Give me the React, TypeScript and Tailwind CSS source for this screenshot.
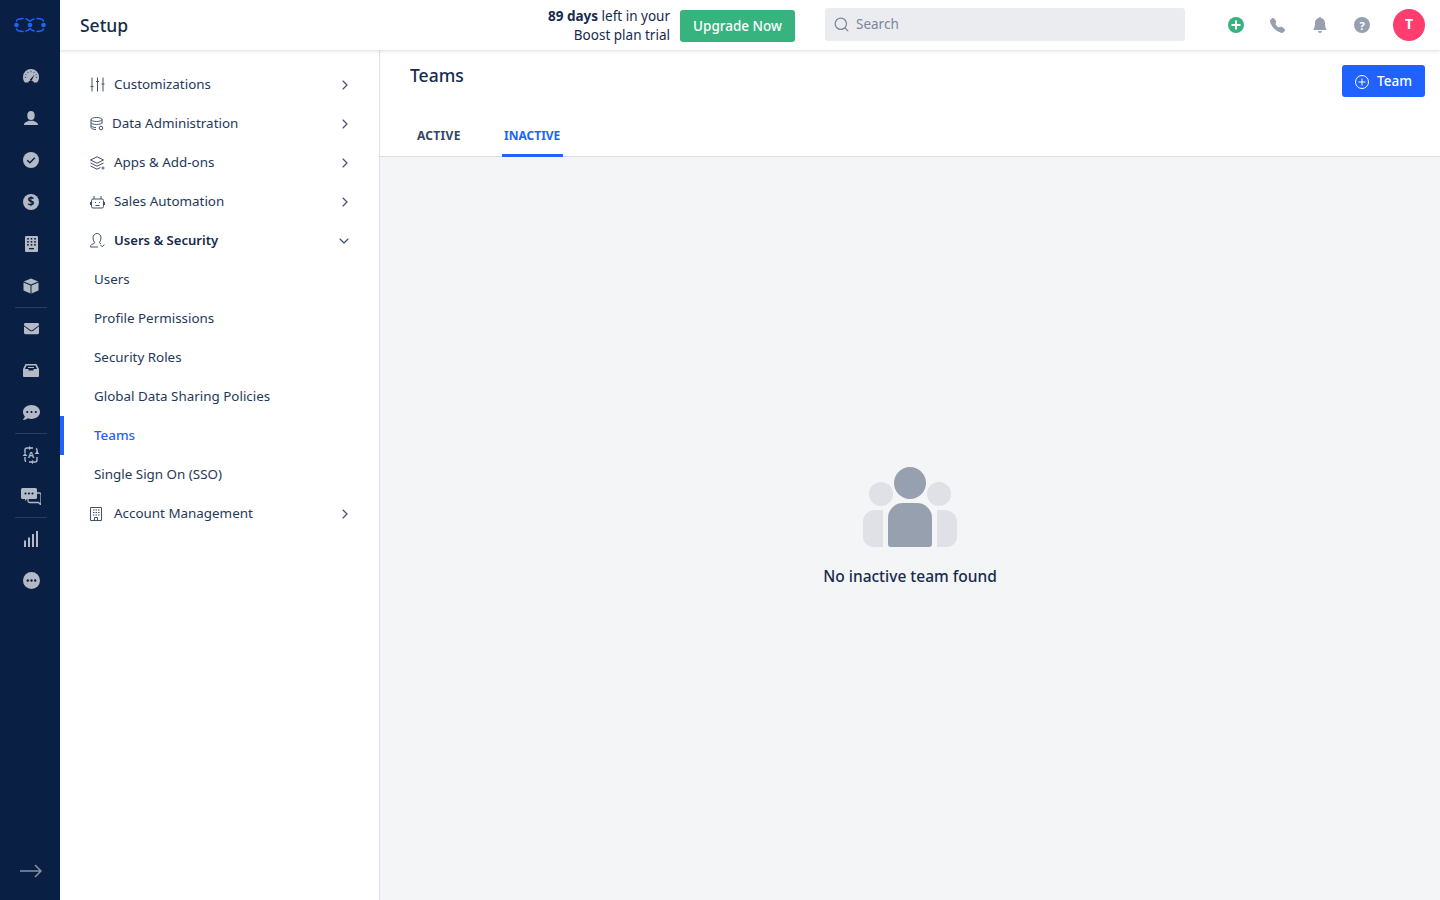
import { ChevronDown, ChevronRight, Search } from "lucide-react";
import { BsBellFill, BsTelephoneFill } from "react-icons/bs";
import { FaEnvelope, FaCommentDots } from "react-icons/fa";

function Gauge() {
  return (
    <svg viewBox="0 0 16 14" className="w-[16px] h-[14px]" fill="#b3bac5">
      <path d="M8 0a8 8 0 0 0-8 8c0 2.400.8 4.300 2 5.600h3A3.400 3.400 0 0 1 8 11.600c1.200 0 2.400.8 3 2h3c1.200-1.300 2-3.200 2-5.600a8 8 0 0 0-8-8Z" />
      <path d="M7.200 10.200 11.600 5.600 9 11a1 1 0 1 1-1.800-.8Z" fill="#0a1f44" />
      <path d="M8 1.800v1.500M4.600 2.800l.7 1.300M2.300 5.200l1.200.7M13.700 5.200l-1.200.7M11.400 2.800l-.7 1.300M1.700 8.300h1.500M12.800 8.300h1.500" stroke="#0a1f44" strokeWidth=".7" />
    </svg>
  );
}

function Bust() {
  return (
    <svg viewBox="0 0 14 14" className="w-[14px] h-[14px]" fill="#b3bac5">
      <ellipse cx="7" cy="4.500" rx="3.700" ry="4.500" />
      <path d="M0 14c0-2.800 2.800-3.300 5-4.200h4c2.200.9 5 1.400 5 4.200Z" />
    </svg>
  );
}

function CheckDisc() {
  return (
    <svg viewBox="0 0 16 16" className="w-[16px] h-[16px]">
      <circle cx="8" cy="8" r="8" fill="#b3bac5" />
      <path d="m4.300 8.200 2.600 2.500 4.900-4.900" fill="none" stroke="#0a1f44" strokeWidth="1.500" />
    </svg>
  );
}

function DollarDisc() {
  return (
    <div className="w-[16px] h-[16px] rounded-full bg-[#b3bac5] flex items-center justify-center text-[#0a1f44] text-[12px] font-bold leading-none">
      $
    </div>
  );
}

function Building() {
  const dots = [3, 6.500, 10];
  return (
    <svg viewBox="0 0 13 16" className="w-[13px] h-[16px]">
      <rect width="13" height="16" rx="1" fill="#b3bac5" />
      {[2.500, 5.500, 8.500].map((y) =>
        dots.map((x) => <rect key={`${x}-${y}`} x={x - 0.8} y={y - 0.5} width="1.600" height="1.600" fill="#0a1f44" />)
      )}
      <rect x="4" y="12" width="5" height="1.300" fill="#0a1f44" />
    </svg>
  );
}

function Cube() {
  return (
    <svg viewBox="0 0 16 16" className="w-[16px] h-[16px]" fill="#b3bac5">
      <path d="M8 .5 15.200 3.500 8 6.500.8 3.500 8 .5Z" />
      <path d="M.5 4.500 7.500 7.400V15.500L.5 12.600V4.500Z" />
      <path d="M15.500 4.500 8.500 7.400V15.500L15.500 12.600V4.500Z" />
    </svg>
  );
}

function InboxTray() {
  return (
    <svg viewBox="0 0 16 13" className="w-[16px] h-[13px]">
      <path d="M2.500 0h11L16 5v7a1 1 0 0 1-1 1H1a1 1 0 0 1-1-1V5Z" fill="#b3bac5" />
      <path d="M3.500 1.500h9L14 5h-3.500v1.500h-5V5H2Z" fill="#0a1f44" />
      <path d="M5 3h6v1H5Z" fill="#b3bac5" />
    </svg>
  );
}

function Translate() {
  return (
    <svg viewBox="0 0 18 20" className="w-[18px] h-[20px]" fill="none" stroke="#b3bac5" strokeWidth="1.400">
      <path d="M3 8V5a2 2 0 0 1 2-2h6M15 12v3a2 2 0 0 1-2 2H7" />
      <path d="M15 8V5a2 2 0 0 0-1-1.700M3 12v3a2 2 0 0 0 1 1.700" />
      <path d="M7 .8 9 3 7 5.200ZM11 14.800 9 17l2 2.200ZM.6 11 3 8l2.400 3ZM12.600 9 15 6l2.400 3Z" fill="#b3bac5" stroke="none" />
      <text x="9" y="13" fontSize="9" fontWeight="700" fill="#b3bac5" stroke="none" textAnchor="middle" fontFamily="Noto Sans, sans-serif">A</text>
    </svg>
  );
}

function Chats() {
  return (
    <svg viewBox="0 0 20 17" className="w-[20px] h-[17px]">
      <path d="M9 5h9.500A1.500 1.500 0 0 1 20 6.500v10.500l-2.500-2.500H8.500A1.500 1.500 0 0 1 7 13V7Z" fill="none" stroke="#b3bac5" strokeWidth="1.300" />
      <path d="M1.500 0h13A1.500 1.500 0 0 1 16 1.500v8a1.500 1.500 0 0 1-1.500 1.500H6l-2 2v-2H1.500A1.500 1.500 0 0 1 0 9.500v-8A1.500 1.500 0 0 1 1.500 0Z" fill="#b3bac5" />
      <circle cx="4.500" cy="5.500" r="1.100" fill="#0a1f44" />
      <circle cx="8" cy="5.500" r="1.100" fill="#0a1f44" />
      <circle cx="11.500" cy="5.500" r="1.100" fill="#0a1f44" />
    </svg>
  );
}

function Bars() {
  return (
    <svg viewBox="0 0 14 16" className="w-[14px] h-[16px]" fill="#b3bac5">
      <rect x="0" y="9.500" width="2" height="6.500" />
      <rect x="4" y="6.500" width="2" height="9.500" />
      <rect x="8" y="3" width="2" height="13" />
      <rect x="12" y="0" width="2" height="16" />
    </svg>
  );
}

function MoreDisc() {
  return (
    <svg viewBox="0 0 17 17" className="w-[17px] h-[17px]">
      <circle cx="8.500" cy="8.500" r="8.500" fill="#b3bac5" />
      <circle cx="4.800" cy="8.500" r="1.200" fill="#0a1f44" />
      <circle cx="8.500" cy="8.500" r="1.200" fill="#0a1f44" />
      <circle cx="12.200" cy="8.500" r="1.200" fill="#0a1f44" />
    </svg>
  );
}

function Logo() {
  return (
    <svg viewBox="0 0 32 16" className="w-[32px] h-[16px]" fill="none" stroke="#1f62ff" strokeWidth="1.500" strokeLinecap="round">
      <path d="M2.500 4C3 2.500 5 1.500 9 1.500M12 2C14 2.600 15 3.500 16 4.500 17 3.500 18 2.600 20 2M23 1.500C27 1.500 29 2.500 29.500 4" />
      <path d="M2.500 12C3 13.500 5 14.500 9 14.500M12 14C14 13.400 15 12.500 16 11.500 17 12.500 18 13.400 20 14M23 14.500C27 14.500 29 13.500 29.500 12" />
      <circle cx="2.500" cy="8" r="2.300" fill="#1f62ff" stroke="none" />
      <circle cx="16" cy="8" r="2.300" fill="#1f62ff" stroke="none" />
      <circle cx="29.500" cy="8" r="2.300" fill="#1f62ff" stroke="none" />
    </svg>
  );
}

function Rail() {
  const Slot = ({ children, h = "h-[42px]" }: { children: React.ReactNode; h?: string }) => (
    <div className={`${h} flex items-center justify-center w-full`}>{children}</div>
  );
  const Rule = () => <div className="w-[32px] h-px bg-[#2b3d5f] mx-auto" />;

  return (
    <aside className="w-[60px] shrink-0 h-full bg-[#0a1f44] flex flex-col items-center pl-[2px]">
      <div className="h-[55px] pt-[17px] flex justify-center w-full -ml-[2px]">
        <Logo />
      </div>
      <Slot><Gauge /></Slot>
      <Slot><Bust /></Slot>
      <Slot><CheckDisc /></Slot>
      <Slot><DollarDisc /></Slot>
      <Slot><Building /></Slot>
      <Slot><Cube /></Slot>
      <Rule />
      <Slot h="h-[41px]"><FaEnvelope className="w-[15px] h-[15px] mb-[1px] text-[#b3bac5]" /></Slot>
      <Slot><InboxTray /></Slot>
      <Slot><FaCommentDots className="w-[17px] h-[17px] text-[#b3bac5]" /></Slot>
      <Rule />
      <Slot h="h-[41px]"><Translate /></Slot>
      <Slot><Chats /></Slot>
      <Rule />
      <Slot h="h-[41px]"><Bars /></Slot>
      <Slot><MoreDisc /></Slot>
      <div className="mt-auto mb-[22px] -ml-[1px] text-[#8993a4]">
        <svg viewBox="0 0 22 14" className="w-[22px] h-[14px]" fill="none" stroke="currentColor" strokeWidth="1.500">
          <path d="M0 7h21M15 1l6 6-6 6" />
        </svg>
      </div>
    </aside>
  );
}

function TopBar() {
  return (
    <header className="h-[50px] shrink-0 bg-white shadow-[0_1px_3px_rgba(9,30,66,0.16)] relative z-10 flex items-center">
      <div className="pl-[20px] text-[17.5px] font-medium text-[#172b4d]">Setup</div>
      <div className="ml-auto flex items-center">
        <div className="pt-[2px] text-[13.5px] leading-[19px] text-right text-[#172b4d] mr-[10px]">
          <div><span className="font-bold">89 days</span> left in your</div>
          <div>Boost plan trial</div>
        </div>
        <button className="mt-[2px] w-[115px] h-[32px] rounded-[3px] bg-[#36b37e] text-white text-[13.5px] font-medium">Upgrade Now</button>
        <div className="ml-[30px] mb-[2px] w-[360px] h-[33px] rounded-[3px] bg-[#ebecf0] flex items-center pl-[8px] gap-[6px] text-[13.5px] text-[#7a869a]">
          <Search className="w-[17px] h-[17px]" strokeWidth={1.750} />
          <span>Search</span>
        </div>
        <div className="ml-[43px] w-[16px] h-[16px] rounded-full bg-[#36b37e] flex items-center justify-center">
          <svg viewBox="0 0 10 10" className="w-[10px] h-[10px]" stroke="white" strokeWidth="2"><path d="M5 .5v9M.5 5h9" /></svg>
        </div>
        <BsTelephoneFill className="ml-[26px] w-[15px] h-[15px] text-[#97a0af]" />
        <BsBellFill className="ml-[27px] w-[16px] h-[16px] text-[#97a0af]" />
        <div className="ml-[26px] w-[16px] h-[16px] rounded-full bg-[#97a0af] flex items-center justify-center text-white text-[11px] font-bold leading-none">?</div>
        <div className="ml-[23px] mr-[15px] w-[32px] h-[32px] pb-[4px] rounded-full bg-[#ff3d6e] flex items-center justify-center text-white text-[14px] font-bold">T</div>
      </div>
    </header>
  );
}

const ico = { fill: "none", stroke: "#42526e", strokeWidth: 1 };

const menuIcons = {
  sliders: (
    <svg viewBox="0 0 15 15" className="w-[15px] h-[15px]" {...ico}>
      <path d="M2 .5v14M7.500.5v14M13 .5v14M.5 9.500h3M6 4.500h3M11.500 7h3" />
    </svg>
  ),
  db: (
    <svg viewBox="0 0 14 14" className="w-[14px] h-[14px]" {...ico}>
      <ellipse cx="6.500" cy="2.500" rx="5.500" ry="2" />
      <path d="M1 2.500v8c0 1.100 2.500 2 5 2M12 2.500v4M1 5.500c0 1.100 2.500 2 5.500 2s5.500-.9 5.500-2M1 8.500c0 1.100 2.500 2 5 2" />
      <circle cx="11" cy="11" r="1.800" />
    </svg>
  ),
  layers: (
    <svg viewBox="0 0 15 14" className="w-[15px] h-[14px]" {...ico}>
      <path d="M7 .8 13.500 4 7 7.200.5 4 7 .8Z" />
      <path d="M.5 7 7 10.200 13.500 7M.5 10 7 13.200 10.500 11.500" />
      <path d="M13 10.500v3M11.500 12h3" />
    </svg>
  ),
  bot: (
    <svg viewBox="0 0 15 14" className="w-[15px] h-[14px]" {...ico}>
      <rect x="1.500" y="4" width="12" height="9" rx="1.500" />
      <path d="M4 4V1M11 4V1M5.500 7v1M9.500 7v1M5.500 10.500h4M.5 7v3M14.500 7v3" />
    </svg>
  ),
  user: (
    <svg viewBox="0 0 15 15" className="w-[15px] h-[15px]" {...ico}>
      <path d="M.5 14c0-2.500 2-3 3.500-3.500.5-.3.5-1 .3-1.500C3.500 8 3 6.500 3 4.800 3 2.300 5 .5 7 .5s4 1.800 4 4.300c0 1.700-.5 3.200-1.300 4.200-.2.500-.2 1.200.3 1.500l1 .4" />
      <path d="M.5 14H8M10.500 12l1.800 1.800 2-2.300" />
    </svg>
  ),
  building: (
    <svg viewBox="0 0 12 14" className="w-[12px] h-[14px]" {...ico}>
      <path d="M.5.500h11v13H.5zM4.500 13.500v-3h3v3" />
      <path d="M3 3h1.500M5.500 3H7M8 3h1.500M3 5.500h1.500M5.500 5.500H7M8 5.500h1.500M3 8h1.500M5.500 8H7M8 8h1.500" />
    </svg>
  ),
};

function MenuRow({ icon, label, gap = "gap-[9px]", open, bold }: { icon: React.ReactNode; label: string; gap?: string; open?: boolean; bold?: boolean }) {
  return (
    <div className={`h-[39px] pl-[30px] pr-[26px] flex items-center ${gap} text-[13.4px] text-[#253858]`}>
      <span className="w-[15px] flex justify-start">{icon}</span>
      <span className={bold ? "font-semibold text-[13.1px] text-[#172b4d]" : ""}>{label}</span>
      {open ? (
        <ChevronDown className="ml-auto mr-[1px] w-[16px] h-[16px] text-[#42526e]" strokeWidth={1.750} />
      ) : (
        <ChevronRight className="ml-auto w-[16px] h-[16px] text-[#42526e]" strokeWidth={1.750} />
      )}
    </div>
  );
}

function SubRow({ label, active }: { label: string; active?: boolean }) {
  return (
    <div className={`h-[39px] flex items-center text-[13.4px] ${active ? "border-l-[4px] border-[#1f62ff] pl-[30px] text-[#1f62ff] font-medium" : "pl-[34px] text-[#253858]"}`}>
      {label}
    </div>
  );
}

function SideMenu() {
  return (
    <nav className="w-[320px] shrink-0 bg-white border-r border-[#dfe1e6] pt-[15px]">
      <MenuRow icon={menuIcons.sliders} label="Customizations" />
      <MenuRow icon={menuIcons.db} label="Data Administration" gap="gap-[7px]" />
      <MenuRow icon={menuIcons.layers} label="Apps & Add-ons" />
      <MenuRow icon={menuIcons.bot} label="Sales Automation" />
      <MenuRow icon={menuIcons.user} label="Users & Security" open bold />
      <SubRow label="Users" />
      <SubRow label="Profile Permissions" />
      <SubRow label="Security Roles" />
      <SubRow label="Global Data Sharing Policies" />
      <SubRow label="Teams" active />
      <SubRow label="Single Sign On (SSO)" />
      <MenuRow icon={menuIcons.building} label="Account Management" />
    </nav>
  );
}

function EmptyPeople() {
  return (
    <svg viewBox="0 0 94 80" className="w-[94px] h-[80px]">
      <circle cx="18" cy="27" r="12" fill="#dfe1e6" />
      <circle cx="76" cy="27" r="12" fill="#dfe1e6" />
      <path d="M20 43H12A12 12 0 0 0 0 55v15a10 10 0 0 0 10 10h10Z" fill="#dfe1e6" />
      <path d="M74 43h8a12 12 0 0 1 12 12v15a10 10 0 0 1-10 10H74Z" fill="#dfe1e6" />
      <circle cx="47" cy="16" r="16" fill="#97a0af" />
      <path d="M25 51a15 15 0 0 1 15-15h14a15 15 0 0 1 15 15v26a3 3 0 0 1-3 3H28a3 3 0 0 1-3-3Z" fill="#97a0af" />
    </svg>
  );
}

function Content() {
  return (
    <main className="flex-1 flex flex-col min-w-0">
      <div className="h-[107px] shrink-0 bg-white border-b border-[#d6dcea] flex flex-col px-[30px]">
        <div className="flex justify-between items-start">
          <h1 className="text-[17.5px] font-medium text-[#172b4d] pt-[12px] leading-[26px]">Teams</h1>
          <button className="mt-[15px] -mr-[15px] w-[83px] h-[32px] rounded-[3px] bg-[#1f62ff] text-white text-[13.5px] font-medium flex items-center justify-center gap-[8px]">
            <svg viewBox="0 0 14 14" className="w-[14px] h-[14px] mt-[1px]" fill="none" stroke="white" strokeWidth="1"><circle cx="7" cy="7" r="6.500" /><path d="M7 3.500v7M3.500 7h7" /></svg>
            Team
          </button>
        </div>
        <div className="mt-auto -mb-px flex text-[12px] font-bold">
          <div className="h-[40px] px-[7px] flex items-center text-[#344563] pb-[3px] tracking-[0.3px]">ACTIVE</div>
          <div className="ml-[34px] w-[61px] h-[40px] flex items-center justify-center text-[#1f62ff] border-b-[3px] border-[#1f62ff]">INACTIVE</div>
        </div>
      </div>
      <div className="flex-1 bg-[#f4f5f7] flex flex-col items-center pt-[310px]">
        <EmptyPeople />
        <p className="mt-[18px] text-[15.5px] font-medium text-[#172b4d]">No inactive team found</p>
      </div>
    </main>
  );
}

export default function App() {
  return (
    <div className="h-[900px] w-[1440px] flex overflow-hidden font-['Noto_Sans',sans-serif]">
      <Rail />
      <div className="flex-1 flex flex-col min-w-0">
        <TopBar />
        <div className="flex-1 flex min-h-0">
          <SideMenu />
          <Content />
        </div>
      </div>
    </div>
  );
}
